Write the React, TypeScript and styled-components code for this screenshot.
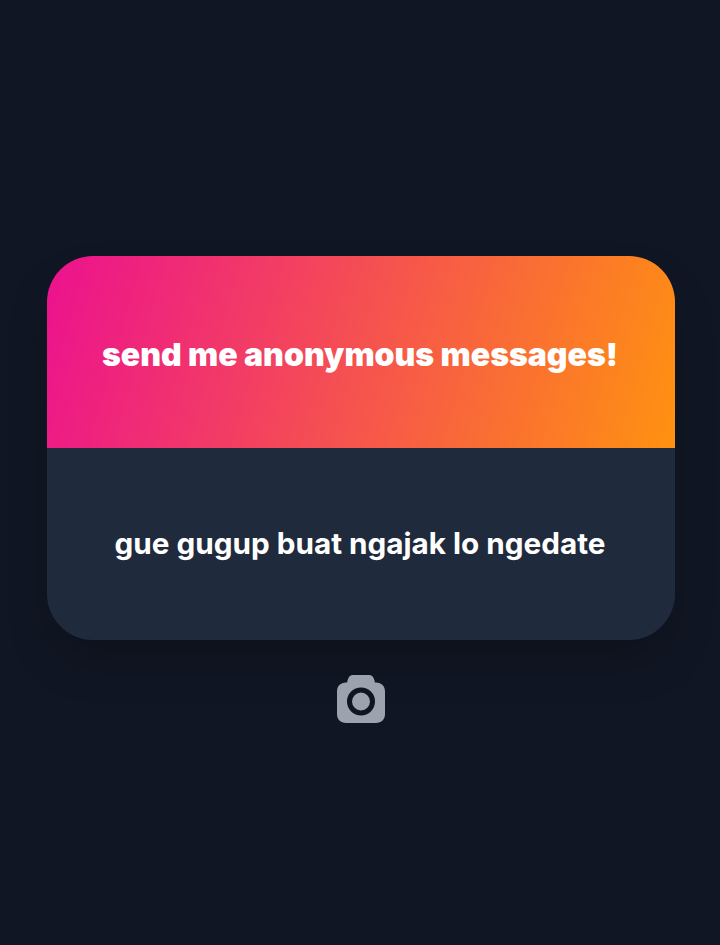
import React from "react";
import styled, { createGlobalStyle } from "styled-components";

const Global = createGlobalStyle`
  html, body { margin: 0; padding: 0; background: #101623; }
  body { font-family: Inter, "Liberation Sans", sans-serif; }
`;

const Page = styled.main`
  box-sizing: border-box;
  height: 945px;
  padding: 256px 45px 0 47px;
  display: flex;
  flex-direction: column;
  align-items: center;
  background: #101623;
`;

const Card = styled.section`
  width: 628px;
  border-radius: 46px;
  overflow: hidden;
  box-shadow: 0 25px 50px -12px rgba(0, 0, 0, 0.25);
`;

const Prompt = styled.div`
  height: 192px;
  display: flex;
  align-items: center;
  justify-content: center;
  background: linear-gradient(106deg, #ec118f, #ff9210);
`;

const PromptText = styled.h1`
  margin: 6px 2px 0 0;
  color: #fff;
  font-size: 32px;
  font-weight: 900;
  letter-spacing: 0;
  line-height: 1.2;
`;

const Answer = styled.div`
  height: 192px;
  display: flex;
  align-items: center;
  justify-content: center;
  background: #1f2a3c;
`;

const AnswerText = styled.p`
  margin: 0 2px 2px 0;
  color: #fff;
  font-size: 29.7px;
  font-weight: 700;
`;

const ShotButton = styled.button`
  margin-top: 35px;
  padding: 0;
  width: 48px;
  height: 48px;
  border: 0;
  background: none;
  color: #9ca3af;
  display: block;
`;

const CameraIcon = () => (
  <svg width="48" height="48" viewBox="0 0 48 48" aria-hidden="true">
    <path
      fill="currentColor"
      fillRule="evenodd"
      d="M16 0h16c2.500 0 4 1.500 5 4l1 3.500h1c5.500 0 9 3.500 9 9V39c0 5.500-3.500 9-9 9H9c-5.500 0-9-3.500-9-9V16.500c0-5.500 3.500-9 9-9h1l1-3.500c1-2.500 2.500-4 5-4ZM24 12.500a14 14 0 1 0 0 28 14 14 0 0 0 0-28Zm0 5a9 9 0 1 1 0 18 9 9 0 0 1 0-18Z"
    />
  </svg>
);

export default function App() {
  return (
    <Page>
      <Global />
      <Card>
        <Prompt>
          <PromptText>send me anonymous messages!</PromptText>
        </Prompt>
        <Answer>
          <AnswerText>gue gugup buat ngajak lo ngedate</AnswerText>
        </Answer>
      </Card>
      <ShotButton aria-label="screenshot">
        <CameraIcon />
      </ShotButton>
    </Page>
  );
}
